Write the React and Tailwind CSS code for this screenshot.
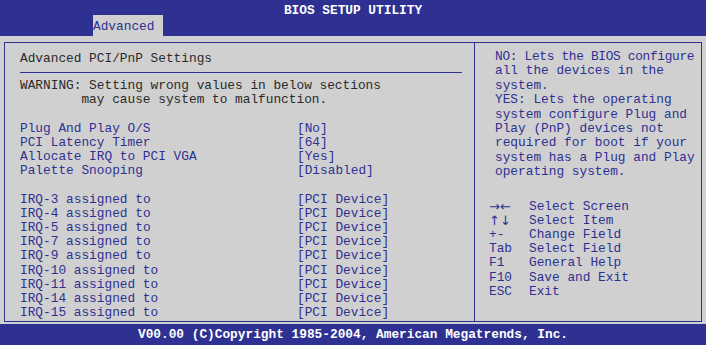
import React from "react";

const options = [
  ["Plug And Play O/S", "[No]"],
  ["PCI Latency Timer", "[64]"],
  ["Allocate IRQ to PCI VGA", "[Yes]"],
  ["Palette Snooping", "[Disabled]"],
];

const irqs = ["3", "4", "5", "7", "9", "10", "11", "14", "15"];

const help = [
  "NO: Lets the BIOS configure",
  "all the devices in the",
  "system.",
  "YES: Lets the operating",
  "system configure Plug and",
  "Play (PnP) devices not",
  "required for boot if your",
  "system has a Plug and Play",
  "operating system.",
];

const keys = [
  ["\u2192\u2190", "Select Screen", true],
  ["\u2191\u2193", "Select Item", true],
  ["+-", "Change Field"],
  ["Tab", "Select Field"],
  ["F1", "General Help"],
  ["F10", "Save and Exit"],
  ["ESC", "Exit"],
];

export default function App() {
  return (
    <div className="w-[706px] h-[345px] flex flex-col bg-[#d0d0d0] text-[12.8px] font-['Liberation_Mono',monospace] whitespace-pre overflow-hidden">
      {/* header */}
      <div className="h-[36px] bg-[#2e3192] flex flex-col">
        <div className="pt-[3px] h-[15px] leading-[15px] text-center text-white font-bold">BIOS SETUP UTILITY</div>
        <div className="flex-1 flex items-end pl-[93px]">
          <div className="w-[70px] h-[21px] bg-[#d0d0d0] text-[#2e3192] leading-[23px]">Advanced</div>
        </div>
      </div>

      {/* body */}
      <div className="flex-1 px-[4px] pt-[6px] pb-[2px]">
        <div className="h-full border border-[#2e3192] flex">
          <div className="w-[469px] pl-[15px] pr-[12px] pt-[9px] text-[#2e3192]">
            <div className="leading-[14px] text-[#2a2a2a]">Advanced PCI/PnP Settings</div>
            <div className="mt-[6px] h-px bg-[#2e3192]" />
            <div className="mt-[6px] leading-[14px] text-[#2a2a2a]">
              <div>WARNING: Setting wrong values in below sections</div>
              <div>        may cause system to malfunction.</div>
            </div>
            <div className="mt-[15px] leading-[14.15px]">
              {options.map(([k, v]) => (
                <div key={k} className="flex">
                  <span className="w-[277px]">{k}</span>
                  <span>{v}</span>
                </div>
              ))}
              <div className="h-[14.15px]" />
              {irqs.map((n) => (
                <div key={n} className="flex">
                  <span className="w-[277px]">IRQ-{n} assigned to</span>
                  <span>[PCI Device]</span>
                </div>
              ))}
            </div>
          </div>
          <div className="flex-1 border-l border-[#2e3192] pt-[7px] text-[#2e3192]">
            <div className="pl-[20px] leading-[14.4px]">
              {help.map((l, i) => (
                <div key={i} className={i === 0 ? "tracking-[-0.3px]" : ""}>{l}</div>
              ))}
            </div>
            <div className="mt-[20px] pl-[14px] leading-[14.2px]">
              {keys.map(([k, d, arrow]) => (
                <div key={k} className="flex h-[14.2px]">
                  <span className={arrow ? "w-[40px] font-['DejaVu_Sans',sans-serif] text-[13px] leading-[14.2px]" : "w-[40px]"}>{k}</span>
                  <span>{d}</span>
                </div>
              ))}
            </div>
          </div>
        </div>
      </div>

      {/* footer */}
      <div className="h-[21px] bg-[#2e3192] text-white font-bold text-center leading-[21px]">
        V00.00 (C)Copyright 1985-2004, American Megatrends, Inc.
      </div>
    </div>
  );
}
